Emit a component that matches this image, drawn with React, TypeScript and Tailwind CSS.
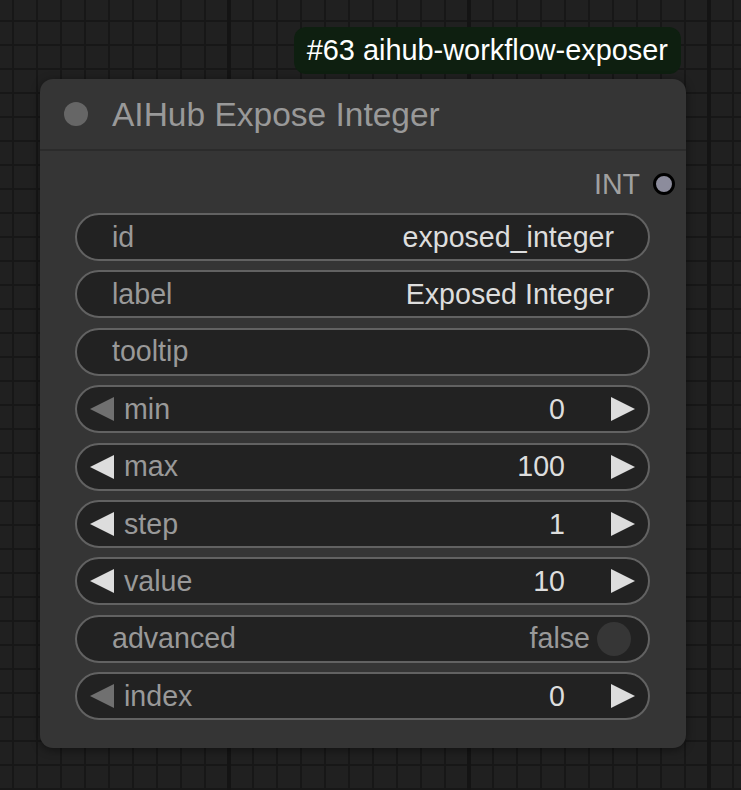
import React from 'react';

type Widget =
  | { kind: 'text'; label: string; value: string }
  | { kind: 'number'; label: string; value: string; leftOff?: boolean }
  | { kind: 'toggle'; label: string; value: string };

const widgets: Widget[] = [
  { kind: 'text', label: 'id', value: 'exposed_integer' },
  { kind: 'text', label: 'label', value: 'Exposed Integer' },
  { kind: 'text', label: 'tooltip', value: '' },
  { kind: 'number', label: 'min', value: '0', leftOff: true },
  { kind: 'number', label: 'max', value: '100' },
  { kind: 'number', label: 'step', value: '1' },
  { kind: 'number', label: 'value', value: '10' },
  { kind: 'toggle', label: 'advanced', value: 'false' },
  { kind: 'number', label: 'index', value: '0', leftOff: true },
];

const Arrow: React.FC<{ dir: 'left' | 'right'; dim?: boolean }> = ({ dir, dim }) => (
  <svg width="24" height="24" viewBox="0 0 24 24" className="shrink-0">
    <polygon
      points={dir === 'left' ? '24,0 24,24 0,12' : '0,0 0,24 24,12'}
      fill={dim ? '#707070' : '#dddddd'}
    />
  </svg>
);

const WidgetRow: React.FC<{ w: Widget }> = ({ w }) => {
  const base =
    'h-[48px] rounded-full border-2 border-[#626262] bg-[#222222] flex items-center text-[28.6px] leading-none';

  if (w.kind === 'number') {
    return (
      <div className={`${base} pl-[13px] pr-[13px]`}>
        <Arrow dir="left" dim={w.leftOff} />
        <span className="ml-[10px] text-[#999999]">{w.label}</span>
        <span className="ml-auto text-[#dddddd]">{w.value}</span>
        <span className="ml-[46px]">
          <Arrow dir="right" />
        </span>
      </div>
    );
  }

  if (w.kind === 'toggle') {
    return (
      <div className={`${base} pl-[35px] pr-[17px]`}>
        <span className="text-[#999999]">{w.label}</span>
        <span className="ml-auto text-[#999999]">{w.value}</span>
        <span className="ml-[7px] w-[34px] h-[34px] rounded-full bg-[#363636]" />
      </div>
    );
  }

  return (
    <div className={`${base} pl-[35px] pr-[34px]`}>
      <span className="text-[#999999]">{w.label}</span>
      <span className="ml-auto text-[#dddddd]">{w.value}</span>
    </div>
  );
};

export default function App() {
  return (
    <div
      className="w-[741px] h-[790px] overflow-hidden bg-[#202020] bg-[linear-gradient(to_right,#141414_4px,transparent_4px),linear-gradient(to_right,#171717_2px,transparent_2px),linear-gradient(to_bottom,#171717_2px,transparent_2px)] bg-[size:240px_240px,24px_24px,24px_24px] bg-[position:227px_0px,12px_0px,0px_20px] pt-[27px] pl-[40px]"
      style={{ fontFamily: '"Liberation Sans", Arial, sans-serif' }}
    >
      <div className="w-[646px] flex flex-col">
        <div className="self-end mr-[5px] h-[47px] px-[13px] rounded-[12px] bg-[#0e1f10] text-white text-[28.9px] flex items-center">
          #63 aihub-workflow-exposer
        </div>

        <div className="mt-[5px] h-[669px] rounded-[13px] bg-[#353535] shadow-[0_2px_10px_rgba(0,0,0,0.45)] flex flex-col">
          <div className="h-[72px] flex items-center pl-[24px] border-b-2 border-[#2b2b2b]">
            <span className="w-[24px] h-[24px] rounded-full bg-[#666666]" />
            <span className="ml-[24px] pt-[2px] text-[33.5px] text-[#999999] leading-none">AIHub Expose Integer</span>
          </div>

          <div className="pt-[17px] pl-[35px] pr-[36px]">
            <div className="h-[32px] flex items-center justify-end">
              <span className="text-[28.6px] text-[#a0a0a0] leading-none">INT</span>
              <span className="ml-[13px] mr-[-25px] w-[22px] h-[22px] rounded-full bg-[#8c8c9c] border-[3px] border-black" />
            </div>

            <div className="mt-[13px] flex flex-col gap-[9.375px]">
              {widgets.map((w) => (
                <WidgetRow key={w.label} w={w} />
              ))}
            </div>
          </div>
        </div>
      </div>
    </div>
  );
}
